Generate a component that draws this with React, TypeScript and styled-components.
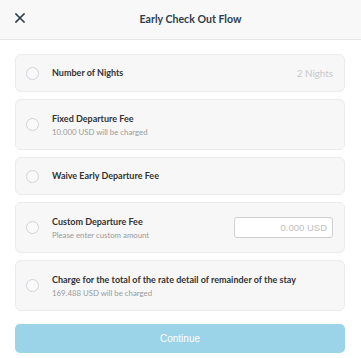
import React from "react";
import styled, { createGlobalStyle } from "styled-components";

const Global = createGlobalStyle`
  html, body { margin: 0; padding: 0; background: #fff; }
  body { font-family: Lato, "Noto Sans", sans-serif; }
  * { box-sizing: border-box; }
`;

const Page = styled.div`
  width: 361px;
  height: 358px;
  background: #fff;
  display: flex;
  flex-direction: column;
`;

const Header = styled.header`
  height: 40px;
  background: #f8f8f8;
  border-bottom: 1px solid #e6e6e6;
  display: grid;
  grid-template-columns: 40px 1fr 20px;
  align-items: center;
`;

const CloseButton = styled.button`
  border: none;
  background: transparent;
  padding: 0;
  width: 40px;
  height: 40px;
  display: flex;
  align-items: center;
  justify-content: center;
  margin-top: -3px;
  color: #2f3e4d;
`;

const Title = styled.h1`
  margin: 0;
  text-align: center;
  font-family: Lato, sans-serif;
  font-weight: 700;
  font-size: 10.6px;
  color: #2f3e4d;
  margin-top: -1px;
`;

const Body = styled.div`
  padding: 14px 16px 0 15px;
  display: flex;
  flex-direction: column;
  gap: 7px;
`;

const Card = styled.label<{ $tall?: boolean }>`
  height: ${(p) => (p.$tall ? "51px" : "38px")};
  background: #f7f7f7;
  border: 1px solid #ebebeb;
  border-radius: 6px;
  padding: 0 11px 0 10px;
  display: flex;
  align-items: center;
`;

const Radio = styled.span`
  width: 13px;
  height: 13px;
  border-radius: 50%;
  border: 1px solid #cdd4db;
  background: #fafafa;
  flex: none;
  margin-right: 13px;
`;

const Text = styled.div`
  flex: 1;
  display: flex;
  flex-direction: column;
  gap: 2px;
  min-width: 0;
`;

const OptionTitle = styled.div`
  font-size: 9px;
  font-weight: 700;
  color: #333;
  line-height: 12px;
  white-space: nowrap;
`;

const OptionSub = styled.div`
  font-size: 7.8px;
  color: #9a9a9a;
  line-height: 10px;
`;

const Value = styled.span`
  font-size: 9.8px;
  color: #c8c8c8;
`;

const AmountInput = styled.input`
  width: 99px;
  height: 21px;
  border: 1px solid #cfcfcf;
  border-radius: 3px;
  background: #fff;
  font-family: "Liberation Sans", Arial, sans-serif;
  font-size: 9.5px;
  text-align: right;
  padding: 0 5px;
  color: #333;
  &::placeholder { color: #c0c0c0; }
`;

const ContinueButton = styled.button`
  margin: 13px 16px 0 15px;
  height: 29px;
  border: none;
  border-radius: 5px;
  background: #9bd3e8;
  color: #fff;
  font-family: "Liberation Sans", Arial, sans-serif;
  font-size: 10px;
`;

const options = [
  { title: "Number of Nights", value: "2 Nights" },
  { title: "Fixed Departure Fee", sub: "10.000 USD will be charged" },
  { title: "Waive Early Departure Fee" },
  { title: "Custom Departure Fee", sub: "Please enter custom amount", input: true },
  {
    title: "Charge for the total of the rate detail of remainder of the stay",
    sub: "169.488 USD will be charged",
  },
];

export default function App() {
  return (
    <Page>
      <Global />
      <Header>
        <CloseButton aria-label="Close">
          <svg width="10" height="10" viewBox="0 0 10 10">
            <path d="M1 1L9 9M9 1L1 9" stroke="currentColor" strokeWidth="1.6" strokeLinecap="square" />
          </svg>
        </CloseButton>
        <Title>Early Check Out Flow</Title>
        <span />
      </Header>
      <Body>
        {options.map((o) => (
          <Card key={o.title} $tall={!!o.sub}>
            <Radio />
            <Text>
              <OptionTitle>{o.title}</OptionTitle>
              {o.sub && <OptionSub>{o.sub}</OptionSub>}
            </Text>
            {o.value && <Value>{o.value}</Value>}
            {o.input && <AmountInput placeholder="0.000 USD" />}
          </Card>
        ))}
      </Body>
      <ContinueButton>Continue</ContinueButton>
    </Page>
  );
}
